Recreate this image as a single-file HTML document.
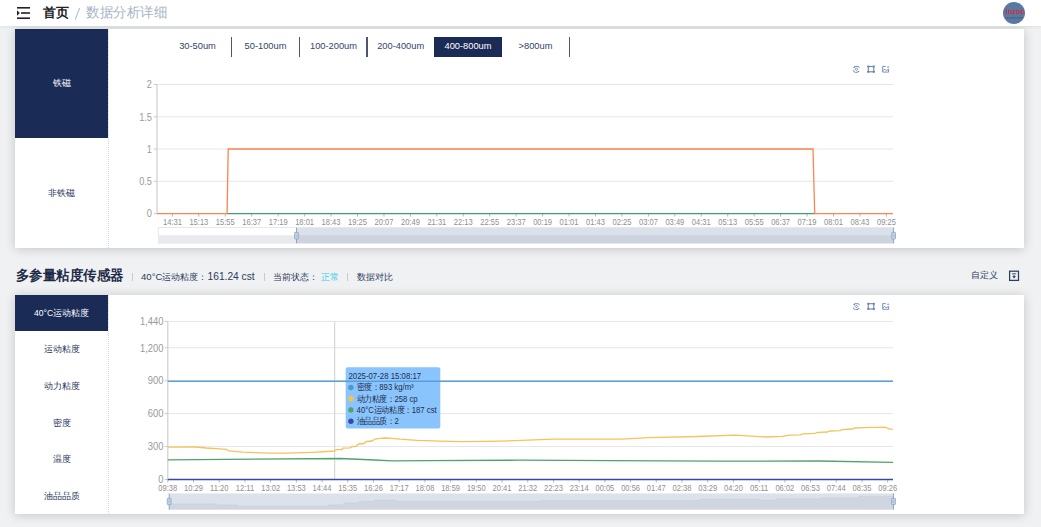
<!DOCTYPE html>
<html><head><meta charset="utf-8">
<style>
*{margin:0;padding:0;box-sizing:border-box}
html,body{width:1041px;height:527px;overflow:hidden;background:#f0f1f3;font-family:"Liberation Sans",sans-serif;position:relative}
.abs{position:absolute}
.header{left:0;top:0;width:1041px;height:26px;background:#fff;box-shadow:0 1px 3px rgba(0,0,0,.07);z-index:3}
.card{left:15px;width:1009px;background:#fff;box-shadow:0 1px 10px rgba(0,0,0,.19)}
.nav{left:0;top:0;width:94px;height:100%;border-right:1px dotted #d3d7de}
.item{position:absolute;left:0;width:93px;display:flex;align-items:center;justify-content:center;color:#26335a;font-size:8.6px;white-space:nowrap;padding-top:2.6px}
.item.on{background:#1a2b56;color:#fff}
.tab{position:absolute;top:37px;height:20px;font-size:9.3px;color:#34426a;padding-bottom:2px;display:flex;align-items:center;justify-content:center;white-space:nowrap}
.sep{position:absolute;top:37px;width:1.4px;height:20px;background:#4a5678}
svg{position:absolute;left:0;top:0}
</style></head><body>
<div class="abs header">
  <svg width="40" height="26" style="left:0;top:0">
    <rect x="17" y="7" width="13" height="1.6" fill="#222"/>
    <rect x="21" y="12.2" width="9" height="1.6" fill="#222"/>
    <rect x="17" y="17.4" width="13" height="1.6" fill="#222"/>
    <path d="M17 10.3 L19.8 13 L17 15.7Z" fill="#222"/>
  </svg>
  <div class="abs" style="left:43px;top:5px;font-size:13px;font-weight:bold;color:#222;line-height:16px">首页</div>
  <svg width="100" height="26" style="left:0;top:0"><line x1="75.2" y1="19.6" x2="79.6" y2="8" stroke="#b3bccb" stroke-width="1.05"/></svg>
  <div class="abs" style="left:86px;top:5px;font-size:13.6px;color:#a7b4c8;line-height:16px;transform:scale(0.965,1);transform-origin:0 0">数据分析详细</div>
  <div class="abs" style="left:1003.4px;top:1.9px;width:22px;height:22px;border-radius:50%;background:#5a79a1;overflow:hidden">
    <svg width="22" height="22" style="left:0;top:0">
      <text x="12" y="13.5" text-anchor="middle" font-size="7.4" font-weight="bold" fill="#cf2f3e" font-family="Liberation Sans, sans-serif" transform="translate(12,0) scale(0.98,0.92) translate(-12,0)">inzoc</text>
      <line x1="2.5" y1="15.8" x2="19.5" y2="15.8" stroke="#2c3550" stroke-width="1.2" stroke-dasharray="1 0.6" opacity=".5"/>
    </svg>
  </div>
</div>

<!-- card 1 -->
<div class="abs card" style="top:28.6px;height:219px">
  <div class="abs nav">
    <div class="item on" style="top:0;height:109.5px;padding-top:1.5px">铁磁</div>
    <div class="item" style="top:109.5px;height:109.5px;padding-top:1.5px">非铁磁</div>
  </div>
</div>

<!-- tabs -->
<div class="tab" style="left:164px;width:67px">30-50um</div>
<div class="sep" style="left:230.5px"></div>
<div class="tab" style="left:232px;width:67px">50-100um</div>
<div class="sep" style="left:298.5px"></div>
<div class="tab" style="left:300px;width:67px">100-200um</div>
<div class="sep" style="left:366.3px"></div>
<div class="tab" style="left:367.7px;width:66px">200-400um</div>
<div class="tab" style="left:434px;width:68px;background:#1a2b56;color:#fff">400-800um</div>
<div class="tab" style="left:502px;width:67px">&gt;800um</div>
<div class="sep" style="left:568.7px"></div>

<!-- section 2 header -->
<div class="abs" style="left:16px;top:268px;font-size:13.6px;font-weight:bold;color:#1d2a48;line-height:16px;transform:scale(0.96,1);transform-origin:0 0">多参量粘度传感器</div>
<div class="abs" style="left:132px;top:273px;width:1px;height:8px;background:#c8c9cc"></div>
<div class="abs" style="left:141px;top:271px;font-size:9.6px;color:#2c3a5c;line-height:12px">40°C</div>
<div class="abs" style="left:162.2px;top:271px;font-size:9px;color:#2c3a5c;line-height:12px">运动粘度：</div>
<div class="abs" style="left:207.6px;top:270.6px;font-size:10.2px;color:#2c3a5c;line-height:12px">161.24 cst</div>
<div class="abs" style="left:264px;top:273px;width:1px;height:8px;background:#c8c9cc"></div>
<div class="abs" style="left:272.5px;top:271px;font-size:9px;color:#2c3a5c;line-height:12px">当前状态：</div>
<div class="abs" style="left:320.6px;top:271px;font-size:9px;color:#3fd0e8;line-height:12px">正常</div>
<div class="abs" style="left:347px;top:273px;width:1px;height:8px;background:#c8c9cc"></div>
<div class="abs" style="left:357px;top:271px;font-size:9px;color:#2c3a5c;line-height:12px">数据对比</div>
<div class="abs" style="left:971px;top:269.4px;font-size:9px;color:#2c3a5c;line-height:12px">自定义</div>
<svg width="1041" height="527" style="pointer-events:none">
  <rect x="1009.6" y="271.2" width="8.9" height="9.2" fill="none" stroke="#2b3f60" stroke-width="1.25"/>
  <rect x="1012.0" y="273.4" width="4.2" height="0.9" fill="#2b3f60"/>
  <rect x="1013.6" y="275" width="1" height="2" fill="#2b3f60"/>
  <path d="M1012.2 276.2 L1016.0 276.2 L1014.1 278.6Z" fill="#2b3f60"/>
</svg>

<!-- card 2 -->
<div class="abs card" style="top:294.6px;height:219.1px">
  <div class="abs nav">
    <div class="item on" style="top:0;height:36.3px">40°C运动粘度</div>
    <div class="item" style="top:36.3px;height:36.6px">运动粘度</div>
    <div class="item" style="top:72.9px;height:36.6px">动力粘度</div>
    <div class="item" style="top:109.5px;height:36.6px">密度</div>
    <div class="item" style="top:146.1px;height:36.6px">温度</div>
    <div class="item" style="top:182.7px;height:36.4px">油品品质</div>
  </div>
</div>

<svg id="charts" width="1041" height="527" style="pointer-events:none">
<line x1="157.0" y1="84.5" x2="893.0" y2="84.5" stroke="#e6e6e6" stroke-width="1"/>
<line x1="154.0" y1="84.5" x2="157.0" y2="84.5" stroke="#c8c8c8" stroke-width="1"/>
<text transform="translate(152.00,88.30) scale(0.88,1)" text-anchor="end" font-size="10.5" fill="#9a9a9a" font-family="Liberation Sans, sans-serif" >2</text>
<line x1="157.0" y1="116.8" x2="893.0" y2="116.8" stroke="#e6e6e6" stroke-width="1"/>
<line x1="154.0" y1="116.8" x2="157.0" y2="116.8" stroke="#c8c8c8" stroke-width="1"/>
<text transform="translate(152.00,120.60) scale(0.88,1)" text-anchor="end" font-size="10.5" fill="#9a9a9a" font-family="Liberation Sans, sans-serif" >1.5</text>
<line x1="157.0" y1="149.0" x2="893.0" y2="149.0" stroke="#e6e6e6" stroke-width="1"/>
<line x1="154.0" y1="149.0" x2="157.0" y2="149.0" stroke="#c8c8c8" stroke-width="1"/>
<text transform="translate(152.00,152.80) scale(0.88,1)" text-anchor="end" font-size="10.5" fill="#9a9a9a" font-family="Liberation Sans, sans-serif" >1</text>
<line x1="157.0" y1="181.3" x2="893.0" y2="181.3" stroke="#e6e6e6" stroke-width="1"/>
<line x1="154.0" y1="181.3" x2="157.0" y2="181.3" stroke="#c8c8c8" stroke-width="1"/>
<text transform="translate(152.00,185.10) scale(0.88,1)" text-anchor="end" font-size="10.5" fill="#9a9a9a" font-family="Liberation Sans, sans-serif" >0.5</text>
<line x1="154.0" y1="213.6" x2="157.0" y2="213.6" stroke="#c8c8c8" stroke-width="1"/>
<text transform="translate(152.00,217.40) scale(0.88,1)" text-anchor="end" font-size="10.5" fill="#9a9a9a" font-family="Liberation Sans, sans-serif" >0</text>
<line x1="157.0" y1="84.5" x2="157.0" y2="213.6" stroke="#cfcfcf" stroke-width="1.2"/>
<line x1="172.40" y1="213.6" x2="172.40" y2="216.6" stroke="#bbb" stroke-width="1"/>
<text transform="translate(172.40,225.30) scale(0.86,1)" text-anchor="middle" font-size="8.8" fill="#8f8f8f" font-family="Liberation Sans, sans-serif" >14:31</text>
<line x1="198.84" y1="213.6" x2="198.84" y2="216.6" stroke="#bbb" stroke-width="1"/>
<text transform="translate(198.84,225.30) scale(0.86,1)" text-anchor="middle" font-size="8.8" fill="#8f8f8f" font-family="Liberation Sans, sans-serif" >15:13</text>
<line x1="225.29" y1="213.6" x2="225.29" y2="216.6" stroke="#bbb" stroke-width="1"/>
<text transform="translate(225.29,225.30) scale(0.86,1)" text-anchor="middle" font-size="8.8" fill="#8f8f8f" font-family="Liberation Sans, sans-serif" >15:55</text>
<line x1="251.73" y1="213.6" x2="251.73" y2="216.6" stroke="#bbb" stroke-width="1"/>
<text transform="translate(251.73,225.30) scale(0.86,1)" text-anchor="middle" font-size="8.8" fill="#8f8f8f" font-family="Liberation Sans, sans-serif" >16:37</text>
<line x1="278.18" y1="213.6" x2="278.18" y2="216.6" stroke="#bbb" stroke-width="1"/>
<text transform="translate(278.18,225.30) scale(0.86,1)" text-anchor="middle" font-size="8.8" fill="#8f8f8f" font-family="Liberation Sans, sans-serif" >17:19</text>
<line x1="304.62" y1="213.6" x2="304.62" y2="216.6" stroke="#bbb" stroke-width="1"/>
<text transform="translate(304.62,225.30) scale(0.86,1)" text-anchor="middle" font-size="8.8" fill="#8f8f8f" font-family="Liberation Sans, sans-serif" >18:01</text>
<line x1="331.07" y1="213.6" x2="331.07" y2="216.6" stroke="#bbb" stroke-width="1"/>
<text transform="translate(331.07,225.30) scale(0.86,1)" text-anchor="middle" font-size="8.8" fill="#8f8f8f" font-family="Liberation Sans, sans-serif" >18:43</text>
<line x1="357.51" y1="213.6" x2="357.51" y2="216.6" stroke="#bbb" stroke-width="1"/>
<text transform="translate(357.51,225.30) scale(0.86,1)" text-anchor="middle" font-size="8.8" fill="#8f8f8f" font-family="Liberation Sans, sans-serif" >19:25</text>
<line x1="383.96" y1="213.6" x2="383.96" y2="216.6" stroke="#bbb" stroke-width="1"/>
<text transform="translate(383.96,225.30) scale(0.86,1)" text-anchor="middle" font-size="8.8" fill="#8f8f8f" font-family="Liberation Sans, sans-serif" >20:07</text>
<line x1="410.40" y1="213.6" x2="410.40" y2="216.6" stroke="#bbb" stroke-width="1"/>
<text transform="translate(410.40,225.30) scale(0.86,1)" text-anchor="middle" font-size="8.8" fill="#8f8f8f" font-family="Liberation Sans, sans-serif" >20:49</text>
<line x1="436.84" y1="213.6" x2="436.84" y2="216.6" stroke="#bbb" stroke-width="1"/>
<text transform="translate(436.84,225.30) scale(0.86,1)" text-anchor="middle" font-size="8.8" fill="#8f8f8f" font-family="Liberation Sans, sans-serif" >21:31</text>
<line x1="463.29" y1="213.6" x2="463.29" y2="216.6" stroke="#bbb" stroke-width="1"/>
<text transform="translate(463.29,225.30) scale(0.86,1)" text-anchor="middle" font-size="8.8" fill="#8f8f8f" font-family="Liberation Sans, sans-serif" >22:13</text>
<line x1="489.73" y1="213.6" x2="489.73" y2="216.6" stroke="#bbb" stroke-width="1"/>
<text transform="translate(489.73,225.30) scale(0.86,1)" text-anchor="middle" font-size="8.8" fill="#8f8f8f" font-family="Liberation Sans, sans-serif" >22:55</text>
<line x1="516.18" y1="213.6" x2="516.18" y2="216.6" stroke="#bbb" stroke-width="1"/>
<text transform="translate(516.18,225.30) scale(0.86,1)" text-anchor="middle" font-size="8.8" fill="#8f8f8f" font-family="Liberation Sans, sans-serif" >23:37</text>
<line x1="542.62" y1="213.6" x2="542.62" y2="216.6" stroke="#bbb" stroke-width="1"/>
<text transform="translate(542.62,225.30) scale(0.86,1)" text-anchor="middle" font-size="8.8" fill="#8f8f8f" font-family="Liberation Sans, sans-serif" >00:19</text>
<line x1="569.07" y1="213.6" x2="569.07" y2="216.6" stroke="#bbb" stroke-width="1"/>
<text transform="translate(569.07,225.30) scale(0.86,1)" text-anchor="middle" font-size="8.8" fill="#8f8f8f" font-family="Liberation Sans, sans-serif" >01:01</text>
<line x1="595.51" y1="213.6" x2="595.51" y2="216.6" stroke="#bbb" stroke-width="1"/>
<text transform="translate(595.51,225.30) scale(0.86,1)" text-anchor="middle" font-size="8.8" fill="#8f8f8f" font-family="Liberation Sans, sans-serif" >01:43</text>
<line x1="621.96" y1="213.6" x2="621.96" y2="216.6" stroke="#bbb" stroke-width="1"/>
<text transform="translate(621.96,225.30) scale(0.86,1)" text-anchor="middle" font-size="8.8" fill="#8f8f8f" font-family="Liberation Sans, sans-serif" >02:25</text>
<line x1="648.40" y1="213.6" x2="648.40" y2="216.6" stroke="#bbb" stroke-width="1"/>
<text transform="translate(648.40,225.30) scale(0.86,1)" text-anchor="middle" font-size="8.8" fill="#8f8f8f" font-family="Liberation Sans, sans-serif" >03:07</text>
<line x1="674.84" y1="213.6" x2="674.84" y2="216.6" stroke="#bbb" stroke-width="1"/>
<text transform="translate(674.84,225.30) scale(0.86,1)" text-anchor="middle" font-size="8.8" fill="#8f8f8f" font-family="Liberation Sans, sans-serif" >03:49</text>
<line x1="701.29" y1="213.6" x2="701.29" y2="216.6" stroke="#bbb" stroke-width="1"/>
<text transform="translate(701.29,225.30) scale(0.86,1)" text-anchor="middle" font-size="8.8" fill="#8f8f8f" font-family="Liberation Sans, sans-serif" >04:31</text>
<line x1="727.73" y1="213.6" x2="727.73" y2="216.6" stroke="#bbb" stroke-width="1"/>
<text transform="translate(727.73,225.30) scale(0.86,1)" text-anchor="middle" font-size="8.8" fill="#8f8f8f" font-family="Liberation Sans, sans-serif" >05:13</text>
<line x1="754.18" y1="213.6" x2="754.18" y2="216.6" stroke="#bbb" stroke-width="1"/>
<text transform="translate(754.18,225.30) scale(0.86,1)" text-anchor="middle" font-size="8.8" fill="#8f8f8f" font-family="Liberation Sans, sans-serif" >05:55</text>
<line x1="780.62" y1="213.6" x2="780.62" y2="216.6" stroke="#bbb" stroke-width="1"/>
<text transform="translate(780.62,225.30) scale(0.86,1)" text-anchor="middle" font-size="8.8" fill="#8f8f8f" font-family="Liberation Sans, sans-serif" >06:37</text>
<line x1="807.07" y1="213.6" x2="807.07" y2="216.6" stroke="#bbb" stroke-width="1"/>
<text transform="translate(807.07,225.30) scale(0.86,1)" text-anchor="middle" font-size="8.8" fill="#8f8f8f" font-family="Liberation Sans, sans-serif" >07:19</text>
<line x1="833.51" y1="213.6" x2="833.51" y2="216.6" stroke="#bbb" stroke-width="1"/>
<text transform="translate(833.51,225.30) scale(0.86,1)" text-anchor="middle" font-size="8.8" fill="#8f8f8f" font-family="Liberation Sans, sans-serif" >08:01</text>
<line x1="859.96" y1="213.6" x2="859.96" y2="216.6" stroke="#bbb" stroke-width="1"/>
<text transform="translate(859.96,225.30) scale(0.86,1)" text-anchor="middle" font-size="8.8" fill="#8f8f8f" font-family="Liberation Sans, sans-serif" >08:43</text>
<line x1="886.40" y1="213.6" x2="886.40" y2="216.6" stroke="#bbb" stroke-width="1"/>
<text transform="translate(886.40,225.30) scale(0.86,1)" text-anchor="middle" font-size="8.8" fill="#8f8f8f" font-family="Liberation Sans, sans-serif" >09:25</text>
<polyline points="226.6,213.6 814.7,213.6" fill="none" stroke="#3ba272" stroke-width="1.3"/>
<polyline points="157.0,213.6 227.1,213.6 228.2,149 813,149 814.7,213.6 893.0,213.6" fill="none" stroke="#fc8452" stroke-width="1.3"/>
<rect x="158.3" y="227.6" width="735.3" height="15.6" fill="#fff" stroke="#e0e3e8" stroke-width="0.8"/>
<rect x="158.7" y="235.3" width="734.5" height="7.7" fill="#e8eaee"/>
<rect x="296.5" y="228" width="597" height="15.2" fill="#dbe1ea"/>
<rect x="296.5" y="235.3" width="597" height="7.8" fill="#cdd4df"/>
<line x1="296.5" y1="227.6" x2="296.5" y2="243.3" stroke="#8fa6c6" stroke-width="1"/>
<rect x="294.6" y="232.4" width="3.8" height="6.6" rx="0.4" fill="#c8d3e3" stroke="#8fa6c6" stroke-width="0.8"/>
<line x1="295.6" y1="235" x2="297.4" y2="235" stroke="#8fa6c6" stroke-width="0.5"/><line x1="295.6" y1="236.5" x2="297.4" y2="236.5" stroke="#8fa6c6" stroke-width="0.5"/>
<line x1="893.6" y1="227.6" x2="893.6" y2="243.3" stroke="#8fa6c6" stroke-width="1"/>
<rect x="891.7" y="232.4" width="3.8" height="6.6" rx="0.4" fill="#c8d3e3" stroke="#8fa6c6" stroke-width="0.8"/>
<line x1="892.7" y1="235" x2="894.5" y2="235" stroke="#8fa6c6" stroke-width="0.5"/><line x1="892.7" y1="236.5" x2="894.5" y2="236.5" stroke="#8fa6c6" stroke-width="0.5"/>
<g fill="none" stroke="#6d86b2" stroke-width="0.9" transform="translate(0,0)"><path d="M854.6 66.5 L858.2 66.5 Q859.3 66.7 859.3 67.9"/><path d="M852.9 67.2 L854.9 66 L854.9 68.2Z" fill="#6d86b2" stroke="none"/><path d="M856.4 67.9 L857.7 69.2 L856.4 70.5 L855.1 69.2 Z"/><path d="M853.3 70.2 Q853.4 72.3 855.4 72.3 L857.9 72.3"/><path d="M859.7 71.5 L857.7 72.6 L857.7 70.4Z" fill="#6d86b2" stroke="none"/><rect x="868.3" y="66.5" width="5.5" height="5.3" stroke-width="1.1"/><rect x="867.25" y="65.45" width="2.1" height="2.1" rx="0.5" fill="#6d86b2" stroke="none"/><rect x="867.25" y="70.75" width="2.1" height="2.1" rx="0.5" fill="#6d86b2" stroke="none"/><rect x="872.75" y="65.45" width="2.1" height="2.1" rx="0.5" fill="#6d86b2" stroke="none"/><rect x="872.75" y="70.75" width="2.1" height="2.1" rx="0.5" fill="#6d86b2" stroke="none"/><path d="M885.8 66.4 L882.7 66.4 L882.7 72.1 L888.6 72.1 L888.6 68.9"/><path d="M882.9 70.8 L884.6 69.1 L886.1 70.6 L887.3 69.8 L888.4 70.6"/><path d="M888.1 66 L889.4 67.6 L886.8 67.6Z" fill="#6d86b2" stroke="none"/></g>
<g fill="none" stroke="#6d86b2" stroke-width="0.9" transform="translate(0,237.2)"><path d="M854.6 66.5 L858.2 66.5 Q859.3 66.7 859.3 67.9"/><path d="M852.9 67.2 L854.9 66 L854.9 68.2Z" fill="#6d86b2" stroke="none"/><path d="M856.4 67.9 L857.7 69.2 L856.4 70.5 L855.1 69.2 Z"/><path d="M853.3 70.2 Q853.4 72.3 855.4 72.3 L857.9 72.3"/><path d="M859.7 71.5 L857.7 72.6 L857.7 70.4Z" fill="#6d86b2" stroke="none"/><rect x="868.3" y="66.5" width="5.5" height="5.3" stroke-width="1.1"/><rect x="867.25" y="65.45" width="2.1" height="2.1" rx="0.5" fill="#6d86b2" stroke="none"/><rect x="867.25" y="70.75" width="2.1" height="2.1" rx="0.5" fill="#6d86b2" stroke="none"/><rect x="872.75" y="65.45" width="2.1" height="2.1" rx="0.5" fill="#6d86b2" stroke="none"/><rect x="872.75" y="70.75" width="2.1" height="2.1" rx="0.5" fill="#6d86b2" stroke="none"/><path d="M885.8 66.4 L882.7 66.4 L882.7 72.1 L888.6 72.1 L888.6 68.9"/><path d="M882.9 70.8 L884.6 69.1 L886.1 70.6 L887.3 69.8 L888.4 70.6"/><path d="M888.1 66 L889.4 67.6 L886.8 67.6Z" fill="#6d86b2" stroke="none"/></g>
<line x1="167.8" y1="321.40" x2="893.0" y2="321.40" stroke="#e6e6e6" stroke-width="1"/>
<line x1="164.8" y1="321.40" x2="167.8" y2="321.40" stroke="#c8c8c8" stroke-width="1"/>
<text transform="translate(163.50,325.20) scale(0.9,1)" text-anchor="end" font-size="10.5" fill="#9a9a9a" font-family="Liberation Sans, sans-serif" >1,440</text>
<line x1="167.8" y1="347.75" x2="893.0" y2="347.75" stroke="#e6e6e6" stroke-width="1"/>
<line x1="164.8" y1="347.75" x2="167.8" y2="347.75" stroke="#c8c8c8" stroke-width="1"/>
<text transform="translate(163.50,351.55) scale(0.9,1)" text-anchor="end" font-size="10.5" fill="#9a9a9a" font-family="Liberation Sans, sans-serif" >1,200</text>
<line x1="167.8" y1="380.69" x2="893.0" y2="380.69" stroke="#e6e6e6" stroke-width="1"/>
<line x1="164.8" y1="380.69" x2="167.8" y2="380.69" stroke="#c8c8c8" stroke-width="1"/>
<text transform="translate(163.50,384.49) scale(0.9,1)" text-anchor="end" font-size="10.5" fill="#9a9a9a" font-family="Liberation Sans, sans-serif" >900</text>
<line x1="167.8" y1="413.62" x2="893.0" y2="413.62" stroke="#e6e6e6" stroke-width="1"/>
<line x1="164.8" y1="413.62" x2="167.8" y2="413.62" stroke="#c8c8c8" stroke-width="1"/>
<text transform="translate(163.50,417.43) scale(0.9,1)" text-anchor="end" font-size="10.5" fill="#9a9a9a" font-family="Liberation Sans, sans-serif" >600</text>
<line x1="167.8" y1="446.56" x2="893.0" y2="446.56" stroke="#e6e6e6" stroke-width="1"/>
<line x1="164.8" y1="446.56" x2="167.8" y2="446.56" stroke="#c8c8c8" stroke-width="1"/>
<text transform="translate(163.50,450.36) scale(0.9,1)" text-anchor="end" font-size="10.5" fill="#9a9a9a" font-family="Liberation Sans, sans-serif" >300</text>
<line x1="164.8" y1="479.50" x2="167.8" y2="479.50" stroke="#c8c8c8" stroke-width="1"/>
<text transform="translate(163.50,483.30) scale(0.9,1)" text-anchor="end" font-size="10.5" fill="#9a9a9a" font-family="Liberation Sans, sans-serif" >0</text>
<line x1="167.8" y1="321.40" x2="167.8" y2="479.5" stroke="#cfcfcf" stroke-width="1.2"/>
<line x1="167.80" y1="479.5" x2="167.80" y2="482.5" stroke="#bbb" stroke-width="1"/>
<text transform="translate(167.80,491.00) scale(0.86,1)" text-anchor="middle" font-size="8.8" fill="#8f8f8f" font-family="Liberation Sans, sans-serif" >09:38</text>
<line x1="193.51" y1="479.5" x2="193.51" y2="482.5" stroke="#bbb" stroke-width="1"/>
<text transform="translate(193.51,491.00) scale(0.86,1)" text-anchor="middle" font-size="8.8" fill="#8f8f8f" font-family="Liberation Sans, sans-serif" >10:29</text>
<line x1="219.22" y1="479.5" x2="219.22" y2="482.5" stroke="#bbb" stroke-width="1"/>
<text transform="translate(219.22,491.00) scale(0.86,1)" text-anchor="middle" font-size="8.8" fill="#8f8f8f" font-family="Liberation Sans, sans-serif" >11:20</text>
<line x1="244.93" y1="479.5" x2="244.93" y2="482.5" stroke="#bbb" stroke-width="1"/>
<text transform="translate(244.93,491.00) scale(0.86,1)" text-anchor="middle" font-size="8.8" fill="#8f8f8f" font-family="Liberation Sans, sans-serif" >12:11</text>
<line x1="270.64" y1="479.5" x2="270.64" y2="482.5" stroke="#bbb" stroke-width="1"/>
<text transform="translate(270.64,491.00) scale(0.86,1)" text-anchor="middle" font-size="8.8" fill="#8f8f8f" font-family="Liberation Sans, sans-serif" >13:02</text>
<line x1="296.35" y1="479.5" x2="296.35" y2="482.5" stroke="#bbb" stroke-width="1"/>
<text transform="translate(296.35,491.00) scale(0.86,1)" text-anchor="middle" font-size="8.8" fill="#8f8f8f" font-family="Liberation Sans, sans-serif" >13:53</text>
<line x1="322.06" y1="479.5" x2="322.06" y2="482.5" stroke="#bbb" stroke-width="1"/>
<text transform="translate(322.06,491.00) scale(0.86,1)" text-anchor="middle" font-size="8.8" fill="#8f8f8f" font-family="Liberation Sans, sans-serif" >14:44</text>
<line x1="347.78" y1="479.5" x2="347.78" y2="482.5" stroke="#bbb" stroke-width="1"/>
<text transform="translate(347.78,491.00) scale(0.86,1)" text-anchor="middle" font-size="8.8" fill="#8f8f8f" font-family="Liberation Sans, sans-serif" >15:35</text>
<line x1="373.49" y1="479.5" x2="373.49" y2="482.5" stroke="#bbb" stroke-width="1"/>
<text transform="translate(373.49,491.00) scale(0.86,1)" text-anchor="middle" font-size="8.8" fill="#8f8f8f" font-family="Liberation Sans, sans-serif" >16:26</text>
<line x1="399.20" y1="479.5" x2="399.20" y2="482.5" stroke="#bbb" stroke-width="1"/>
<text transform="translate(399.20,491.00) scale(0.86,1)" text-anchor="middle" font-size="8.8" fill="#8f8f8f" font-family="Liberation Sans, sans-serif" >17:17</text>
<line x1="424.91" y1="479.5" x2="424.91" y2="482.5" stroke="#bbb" stroke-width="1"/>
<text transform="translate(424.91,491.00) scale(0.86,1)" text-anchor="middle" font-size="8.8" fill="#8f8f8f" font-family="Liberation Sans, sans-serif" >18:08</text>
<line x1="450.62" y1="479.5" x2="450.62" y2="482.5" stroke="#bbb" stroke-width="1"/>
<text transform="translate(450.62,491.00) scale(0.86,1)" text-anchor="middle" font-size="8.8" fill="#8f8f8f" font-family="Liberation Sans, sans-serif" >18:59</text>
<line x1="476.33" y1="479.5" x2="476.33" y2="482.5" stroke="#bbb" stroke-width="1"/>
<text transform="translate(476.33,491.00) scale(0.86,1)" text-anchor="middle" font-size="8.8" fill="#8f8f8f" font-family="Liberation Sans, sans-serif" >19:50</text>
<line x1="502.04" y1="479.5" x2="502.04" y2="482.5" stroke="#bbb" stroke-width="1"/>
<text transform="translate(502.04,491.00) scale(0.86,1)" text-anchor="middle" font-size="8.8" fill="#8f8f8f" font-family="Liberation Sans, sans-serif" >20:41</text>
<line x1="527.75" y1="479.5" x2="527.75" y2="482.5" stroke="#bbb" stroke-width="1"/>
<text transform="translate(527.75,491.00) scale(0.86,1)" text-anchor="middle" font-size="8.8" fill="#8f8f8f" font-family="Liberation Sans, sans-serif" >21:32</text>
<line x1="553.46" y1="479.5" x2="553.46" y2="482.5" stroke="#bbb" stroke-width="1"/>
<text transform="translate(553.46,491.00) scale(0.86,1)" text-anchor="middle" font-size="8.8" fill="#8f8f8f" font-family="Liberation Sans, sans-serif" >22:23</text>
<line x1="579.17" y1="479.5" x2="579.17" y2="482.5" stroke="#bbb" stroke-width="1"/>
<text transform="translate(579.17,491.00) scale(0.86,1)" text-anchor="middle" font-size="8.8" fill="#8f8f8f" font-family="Liberation Sans, sans-serif" >23:14</text>
<line x1="604.88" y1="479.5" x2="604.88" y2="482.5" stroke="#bbb" stroke-width="1"/>
<text transform="translate(604.88,491.00) scale(0.86,1)" text-anchor="middle" font-size="8.8" fill="#8f8f8f" font-family="Liberation Sans, sans-serif" >00:05</text>
<line x1="630.59" y1="479.5" x2="630.59" y2="482.5" stroke="#bbb" stroke-width="1"/>
<text transform="translate(630.59,491.00) scale(0.86,1)" text-anchor="middle" font-size="8.8" fill="#8f8f8f" font-family="Liberation Sans, sans-serif" >00:56</text>
<line x1="656.30" y1="479.5" x2="656.30" y2="482.5" stroke="#bbb" stroke-width="1"/>
<text transform="translate(656.30,491.00) scale(0.86,1)" text-anchor="middle" font-size="8.8" fill="#8f8f8f" font-family="Liberation Sans, sans-serif" >01:47</text>
<line x1="682.01" y1="479.5" x2="682.01" y2="482.5" stroke="#bbb" stroke-width="1"/>
<text transform="translate(682.01,491.00) scale(0.86,1)" text-anchor="middle" font-size="8.8" fill="#8f8f8f" font-family="Liberation Sans, sans-serif" >02:38</text>
<line x1="707.73" y1="479.5" x2="707.73" y2="482.5" stroke="#bbb" stroke-width="1"/>
<text transform="translate(707.73,491.00) scale(0.86,1)" text-anchor="middle" font-size="8.8" fill="#8f8f8f" font-family="Liberation Sans, sans-serif" >03:29</text>
<line x1="733.44" y1="479.5" x2="733.44" y2="482.5" stroke="#bbb" stroke-width="1"/>
<text transform="translate(733.44,491.00) scale(0.86,1)" text-anchor="middle" font-size="8.8" fill="#8f8f8f" font-family="Liberation Sans, sans-serif" >04:20</text>
<line x1="759.15" y1="479.5" x2="759.15" y2="482.5" stroke="#bbb" stroke-width="1"/>
<text transform="translate(759.15,491.00) scale(0.86,1)" text-anchor="middle" font-size="8.8" fill="#8f8f8f" font-family="Liberation Sans, sans-serif" >05:11</text>
<line x1="784.86" y1="479.5" x2="784.86" y2="482.5" stroke="#bbb" stroke-width="1"/>
<text transform="translate(784.86,491.00) scale(0.86,1)" text-anchor="middle" font-size="8.8" fill="#8f8f8f" font-family="Liberation Sans, sans-serif" >06:02</text>
<line x1="810.57" y1="479.5" x2="810.57" y2="482.5" stroke="#bbb" stroke-width="1"/>
<text transform="translate(810.57,491.00) scale(0.86,1)" text-anchor="middle" font-size="8.8" fill="#8f8f8f" font-family="Liberation Sans, sans-serif" >06:53</text>
<line x1="836.28" y1="479.5" x2="836.28" y2="482.5" stroke="#bbb" stroke-width="1"/>
<text transform="translate(836.28,491.00) scale(0.86,1)" text-anchor="middle" font-size="8.8" fill="#8f8f8f" font-family="Liberation Sans, sans-serif" >07:44</text>
<line x1="861.99" y1="479.5" x2="861.99" y2="482.5" stroke="#bbb" stroke-width="1"/>
<text transform="translate(861.99,491.00) scale(0.86,1)" text-anchor="middle" font-size="8.8" fill="#8f8f8f" font-family="Liberation Sans, sans-serif" >08:35</text>
<line x1="887.70" y1="479.5" x2="887.70" y2="482.5" stroke="#bbb" stroke-width="1"/>
<text transform="translate(887.70,491.00) scale(0.86,1)" text-anchor="middle" font-size="8.8" fill="#8f8f8f" font-family="Liberation Sans, sans-serif" >09:26</text>
<line x1="334.7" y1="321.40" x2="334.7" y2="479.5" stroke="#cfcfcf" stroke-width="1"/>
<polyline points="167.8,459.9 340.0,458.5 374.6,460.0 391.9,460.8 426.5,460.6 520.0,460.2 611.0,460.7 715.0,461.1 819.5,461.0 893.0,462.3" fill="none" stroke="#4fa36b" stroke-width="1.3"/>
<polyline points="167.8,447.1 196.0,447.0 206.5,448.0 220.3,448.9 226.0,449.3 229.0,450.9 242.8,452.1 268.8,453.2 286.0,453.2 312.0,452.3 327.5,451.5 334.5,451.0 336.2,449.6 342.0,449.6 343.0,448.2 350.0,447.8 352.5,446.5 356.0,446.3 358.6,444.0 364.0,443.5 366.5,441.5 372.0,441.0 375.0,439.0 380.0,438.3 385.0,438.0 392.0,438.3 400.0,439.2 417.0,440.4 440.0,441.2 461.0,441.6 487.0,441.3 515.0,440.7 553.4,439.2 620.7,439.2 640.0,438.2 649.5,437.7 697.5,436.5 735.0,435.2 765.0,437.0 782.4,436.4 790.0,435.2 800.0,434.8 803.0,433.8 814.8,433.4 818.0,432.4 827.3,432.0 830.0,431.0 839.8,430.6 842.0,429.6 852.3,429.0 855.0,428.0 864.8,427.6 884.8,427.2 889.8,429.2 893.0,429.2" fill="none" stroke="#f6c25a" stroke-width="1.3"/>
<line x1="167.8" y1="479.5" x2="893.0" y2="479.5" stroke="#3a47a8" stroke-width="1.6"/>
<rect x="345.7" y="367.3" width="94.6" height="61.2" rx="2" fill="#8ac4fd"/>
<polyline points="167.8,381.3 893.0,381.3" fill="none" stroke="#55a0dc" stroke-width="1.5"/>
<g font-size="8.6" fill="#1f2d4c" font-family="Liberation Sans, sans-serif"><text transform="translate(348.50,379.30) scale(0.91,1)" text-anchor="start" font-size="8.6" fill="#1f2d4c" font-family="Liberation Sans, sans-serif" >2025-07-28 15:08:17</text><circle cx="350.9" cy="387.5" r="2.7" fill="#4a9bd4"/><text transform="translate(356.60,390.30) scale(0.9,1)" text-anchor="start" font-size="8.6" fill="#1f2d4c" font-family="Liberation Sans, sans-serif" >密度：893 kg/m³</text><circle cx="350.9" cy="398.8" r="2.7" fill="#f5c444"/><text transform="translate(356.60,401.60) scale(0.9,1)" text-anchor="start" font-size="8.6" fill="#1f2d4c" font-family="Liberation Sans, sans-serif" >动力粘度：258 cp</text><circle cx="350.9" cy="410" r="2.7" fill="#4fa36b"/><text transform="translate(356.60,412.80) scale(0.9,1)" text-anchor="start" font-size="8.6" fill="#1f2d4c" font-family="Liberation Sans, sans-serif" >40°C运动粘度：187 cst</text><circle cx="350.9" cy="421.3" r="2.7" fill="#3a47a8"/><text transform="translate(356.60,424.10) scale(0.9,1)" text-anchor="start" font-size="8.6" fill="#1f2d4c" font-family="Liberation Sans, sans-serif" >油品品质：2</text></g>
<rect x="169.2" y="493.4" width="724.3" height="16.2" fill="#dce2ea"/>
<polygon points="169.2,504.0 215.7,504.0 216.5,503.4 217.6,505.0 237.0,505.0 238.8,506.3 327.0,506.3 329.0,505.0 342.0,505.0 344.4,503.0 358.0,503.0 359.6,501.5 373.0,501.5 375.0,500.2 395.0,500.2 397.0,501.5 538.0,501.5 540.0,500.5 698.0,500.5 700.4,499.2 760.0,499.2 761.5,500.2 775.0,500.2 776.8,498.8 820.0,498.8 822.0,497.9 857.0,497.9 859.5,496.3 893.5,496.3 893.5,509.6 169.2,509.6" fill="#cfd6e0"/>
<polyline points="169.2,504.0 215.7,504.0 216.5,503.4 217.6,505.0 237.0,505.0 238.8,506.3 327.0,506.3 329.0,505.0 342.0,505.0 344.4,503.0 358.0,503.0 359.6,501.5 373.0,501.5 375.0,500.2 395.0,500.2 397.0,501.5 538.0,501.5 540.0,500.5 698.0,500.5 700.4,499.2 760.0,499.2 761.5,500.2 775.0,500.2 776.8,498.8 820.0,498.8 822.0,497.9 857.0,497.9 859.5,496.3 893.5,496.3" fill="none" stroke="#c6cedb" stroke-width="0.6"/>
<line x1="169.2" y1="493.4" x2="169.2" y2="509.6" stroke="#8fa6c6" stroke-width="1"/>
<rect x="167.29999999999998" y="498.3" width="3.8" height="6.3" rx="0.4" fill="#c8d3e3" stroke="#8fa6c6" stroke-width="0.8"/>
<line x1="168.29999999999998" y1="500.8" x2="170.1" y2="500.8" stroke="#8fa6c6" stroke-width="0.5"/><line x1="168.29999999999998" y1="502.2" x2="170.1" y2="502.2" stroke="#8fa6c6" stroke-width="0.5"/>
<line x1="893.5" y1="493.4" x2="893.5" y2="509.6" stroke="#8fa6c6" stroke-width="1"/>
<rect x="891.6" y="498.3" width="3.8" height="6.3" rx="0.4" fill="#c8d3e3" stroke="#8fa6c6" stroke-width="0.8"/>
<line x1="892.6" y1="500.8" x2="894.4" y2="500.8" stroke="#8fa6c6" stroke-width="0.5"/><line x1="892.6" y1="502.2" x2="894.4" y2="502.2" stroke="#8fa6c6" stroke-width="0.5"/>
</svg>
</body></html>
